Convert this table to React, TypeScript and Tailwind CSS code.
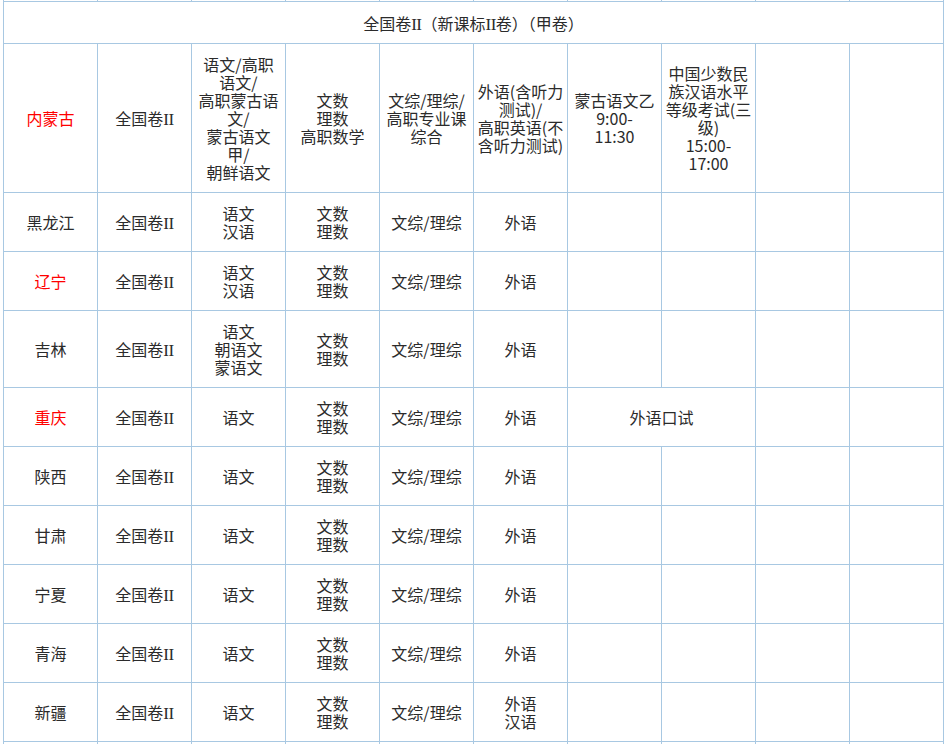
import { Fragment, type ReactNode } from 'react'

type Row = {
  province: string
  red?: boolean
  chinese: string[]
  math: string[]
  foreign: string[]
  oral?: boolean
}

const rows: Row[] = [
  { province: '黑龙江', chinese: ['语文', '汉语'], math: ['文数', '理数'], foreign: ['外语'] },
  { province: '辽宁', red: true, chinese: ['语文', '汉语'], math: ['文数', '理数'], foreign: ['外语'] },
  { province: '吉林', chinese: ['语文', '朝语文', '蒙语文'], math: ['文数', '理数'], foreign: ['外语'] },
  { province: '重庆', red: true, chinese: ['语文'], math: ['文数', '理数'], foreign: ['外语'], oral: true },
  { province: '陕西', chinese: ['语文'], math: ['文数', '理数'], foreign: ['外语'] },
  { province: '甘肃', chinese: ['语文'], math: ['文数', '理数'], foreign: ['外语'] },
  { province: '宁夏', chinese: ['语文'], math: ['文数', '理数'], foreign: ['外语'] },
  { province: '青海', chinese: ['语文'], math: ['文数', '理数'], foreign: ['外语'] },
  { province: '新疆', chinese: ['语文'], math: ['文数', '理数'], foreign: ['外语', '汉语'] },
]

const cell = 'border border-[#a8c8e2] px-[2px] py-[11px] text-center align-middle whitespace-nowrap'
const edge = 'border border-[#a8c8e2] p-0 h-[12px]'

// roman two, serif like the source page
function Two() {
  return <span className="font-['Liberation_Serif',serif] text-[17px] leading-[0] tracking-[-0.5px]">II</span>
}

function Lines({ items }: { items: string[] }) {
  return (
    <>
      {items.map((t, i) => (
        <Fragment key={i}>
          {i > 0 && <br />}
          {t}
        </Fragment>
      ))}
    </>
  )
}

function Td({ children, colSpan, red }: { children?: ReactNode; colSpan?: number; red?: boolean }) {
  return (
    <td colSpan={colSpan} className={`${cell} ${red ? 'text-[#ff0000]' : ''}`}>
      {children}
    </td>
  )
}

function EdgeRow() {
  return (
    <tr>
      {Array.from({ length: 10 }).map((_, i) => (
        <td key={i} className={edge} />
      ))}
    </tr>
  )
}

export default function App() {
  return (
    <div className="h-[744px] w-[945px] overflow-hidden bg-white">
      <table className="ml-[3px] -mt-[11px] w-[941px] table-fixed border-collapse text-[16px] leading-[18px] text-[#2b2b2b] font-['Noto_Sans_CJK_SC','Microsoft_YaHei',sans-serif]">
        <colgroup>
          {Array.from({ length: 10 }).map((_, i) => (
            <col key={i} className="w-[94px]" />
          ))}
        </colgroup>
        <tbody>
          <EdgeRow />
          <tr>
            <td colSpan={10} className={`${cell} pt-[12px]`}>
              全国卷<Two />（新课标<Two />卷）（甲卷）
            </td>
          </tr>
          <tr>
            <Td red>内蒙古</Td>
            <Td>
              全国卷<Two />
            </Td>
            <Td>
              <Lines items={['语文/高职', '语文/', '高职蒙古语', '文/', '蒙古语文', '甲/', '朝鲜语文']} />
            </Td>
            <Td>
              <Lines items={['文数', '理数', '高职数学']} />
            </Td>
            <Td>
              <Lines items={['文综/理综/', '高职专业课', '综合']} />
            </Td>
            <Td>
              <Lines items={['外语(含听力', '测试)/', '高职英语(不', '含听力测试)']} />
            </Td>
            <Td>
              <Lines items={['蒙古语文乙', '9:00-', '11:30']} />
            </Td>
            <Td>
              <Lines items={['中国少数民', '族汉语水平', '等级考试(三', '级)', '15:00-', '17:00']} />
            </Td>
            <Td />
            <Td />
          </tr>
          {rows.map((r) => (
            <tr key={r.province}>
              <Td red={r.red}>{r.province}</Td>
              <Td>
                全国卷<Two />
              </Td>
              <Td>
                <Lines items={r.chinese} />
              </Td>
              <Td>
                <Lines items={r.math} />
              </Td>
              <Td>文综/理综</Td>
              <Td>
                <Lines items={r.foreign} />
              </Td>
              {r.oral ? (
                <Td colSpan={2}>外语口试</Td>
              ) : (
                <>
                  <Td />
                  <Td />
                </>
              )}
              <Td />
              <Td />
            </tr>
          ))}
          <EdgeRow />
        </tbody>
      </table>
    </div>
  )
}
